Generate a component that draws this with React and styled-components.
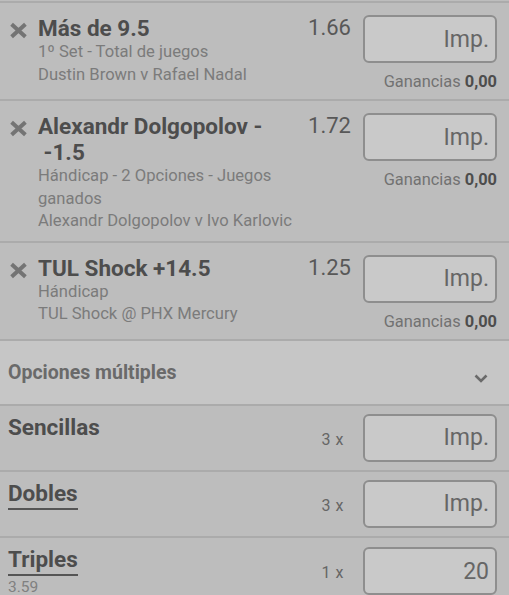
import React from "react";
import styled, { createGlobalStyle } from "styled-components";

const Global = createGlobalStyle`
  html, body { margin: 0; padding: 0; background: #bdbdbd; }
  body { font-family: Roboto, "Liberation Sans", sans-serif; -webkit-font-smoothing: antialiased; }
`;

const Page = styled.div`
  width: 509px;
  padding-top: 1px;
  background: #bdbdbd;
  color: #4d4d4d;
`;

const List = styled.div`
  border-top: 2px solid #ababab;
`;

const BetRow = styled.div`
  display: grid;
  grid-template-columns: 28px 1fr auto 134px;
  align-items: start;
  padding: 12px 12px 8px 10px;
  border-bottom: 2px solid #ababab;
`;

const RemoveIcon = styled.svg`
  width: 17px;
  height: 15px;
  margin-top: 8px;
  display: block;
  overflow: visible;
`;

const BetInfo = styled.div`
  padding-right: 6px;
  min-width: 0;
`;

const BetTitle = styled.div`
  font-size: 22.5px;
  font-weight: 700;
  line-height: 26px;
  color: #4d4d4d;
`;

const BetSub = styled.div`
  font-size: 16.6px;
  line-height: 22.5px;
  color: #7b7b7b;
`;

const Odds = styled.div`
  font-size: 22px;
  line-height: 26px;
  color: #585858;
  margin-right: 12px;
`;

const StakeCol = styled.div`
  display: flex;
  flex-direction: column;
  align-items: stretch;
`;

const StakeBox = styled.div`
  box-sizing: border-box;
  height: 48px;
  border: 2px solid #8e8e8e;
  border-radius: 6px;
  background: #c9c9c9;
  display: flex;
  align-items: center;
  justify-content: flex-end;
  padding: 0 6px 0 0;
  font-size: 23px;
  color: #666;
`;

const Winnings = styled.div`
  margin-top: 9px;
  text-align: right;
  font-size: 16.4px;
  line-height: 19px;
  color: #727272;
  b { color: #4d4d4d; font-weight: 700; }
`;

const SectionHeader = styled.div`
  display: flex;
  align-items: center;
  justify-content: space-between;
  height: 63px;
  padding: 0 21px 0 8px;
  background: #c6c6c6;
  border-bottom: 2px solid #ababab;
`;

const SectionTitle = styled.div`
  font-size: 19.5px;
  font-weight: 700;
  color: #6a6a6a;
`;

const Chevron = styled.svg`
  width: 14px;
  height: 9px;
  margin-top: 13px;
  display: block;
`;

const MultiRow = styled.div`
  display: grid;
  grid-template-columns: 1fr auto 134px;
  align-items: center;
  padding: 8px 12px 8px 8px;
  border-bottom: 2px solid #ababab;
`;

const MultiLabel = styled.div`
  align-self: start;
`;

const MultiName = styled.span`
  display: inline-block;
  font-size: 22.5px;
  font-weight: 700;
  line-height: 26px;
  color: #4d4d4d;
  padding-bottom: ${(p) => (p.$underline ? "2px" : "0")};
  border-bottom: ${(p) => (p.$underline ? "2px solid #555" : "none")};
`;

const MultiOdds = styled.div`
  font-size: 15.5px;
  line-height: 20px;
  color: #808080;
  margin-top: 1px;
`;

const Count = styled.div`
  font-size: 16px;
  letter-spacing: 0.5px;
  color: #666;
  margin-right: 19px;
  padding-top: 3px;
`;

const bets = [
  {
    title: "Más de 9.5",
    subs: ["1º Set - Total de juegos", "Dustin Brown v Rafael Nadal"],
    odds: "1.66",
  },
  {
    title: "Alexandr Dolgopolov - \u00a0-1.5",
    subs: ["Hándicap - 2 Opciones - Juegos ganados", "Alexandr Dolgopolov v Ivo Karlovic"],
    odds: "1.72",
  },
  {
    title: "TUL Shock +14.5",
    subs: ["Hándicap", "TUL Shock @ PHX Mercury"],
    odds: "1.25",
  },
];

const multis = [
  { name: "Sencillas", count: "3 x", value: "Imp.", underline: false },
  { name: "Dobles", count: "3 x", value: "Imp.", underline: true },
  { name: "Triples", count: "1 x", value: "20", underline: true, odds: "3.59" },
];

function XIcon() {
  return (
    <RemoveIcon viewBox="0 0 17 15">
      <path d="M1.6 1.3 L15.4 13.7 M15.4 1.3 L1.6 13.7" stroke="#747474" strokeWidth="4" />
    </RemoveIcon>
  );
}

export default function App() {
  return (
    <Page>
      <Global />
      <List>
        {bets.map((b) => (
          <BetRow key={b.odds}>
            <XIcon />
            <BetInfo>
              <BetTitle>{b.title}</BetTitle>
              {b.subs.map((s) => (
                <BetSub key={s}>{s}</BetSub>
              ))}
            </BetInfo>
            <Odds>{b.odds}</Odds>
            <StakeCol>
              <StakeBox>Imp.</StakeBox>
              <Winnings>
                Ganancias <b>0,00</b>
              </Winnings>
            </StakeCol>
          </BetRow>
        ))}
        <SectionHeader>
          <SectionTitle>Opciones múltiples</SectionTitle>
          <Chevron viewBox="0 0 14 9">
            <path d="M1.5 1.5 L7 7 L12.5 1.5" fill="none" stroke="#6a6a6a" strokeWidth="2.6" />
          </Chevron>
        </SectionHeader>
        {multis.map((m) => (
          <MultiRow key={m.name}>
            <MultiLabel>
              <MultiName $underline={m.underline}>{m.name}</MultiName>
              {m.odds && <MultiOdds>{m.odds}</MultiOdds>}
            </MultiLabel>
            <Count>{m.count}</Count>
            <StakeBox>{m.value}</StakeBox>
          </MultiRow>
        ))}
      </List>
    </Page>
  );
}
